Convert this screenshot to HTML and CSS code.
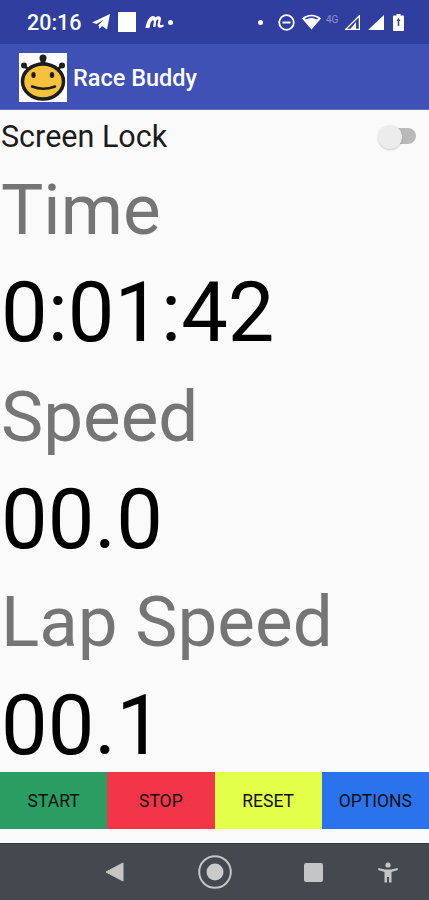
FILE: index.html
```html
<!DOCTYPE html>
<html lang="en">
<head>
<meta charset="utf-8">
<title>Race Buddy</title>
<link rel="stylesheet" href="styles.css">
</head>
<body>
<div class="phone">
  <header class="status">
    <div class="status-left">
      <span class="clock">20:16</span>
      <svg class="ic tg" width="18" height="16" viewBox="0 0 18 16"><path d="M0 8.500 L18 0 L15 15.500 L10 12 L7.500 15 L6.500 11 L12 5.500 L4.500 10 Z" fill="#fff"/></svg>
      <span class="square"></span>
      <svg class="ic em" width="20" height="14" viewBox="0 0 20 14"><path d="M0.500 13 C1.500 6 4.500 1 8 1 C9.500 1 10 2 10.500 2.500 C12.500 0.500 16 0.500 16 4 L15 9 C15 10.500 16.500 10.500 18 9.500 L19 11 C16.500 13.500 12 13.500 12.500 9.500 L13.500 5 C12.500 3.500 11.500 5 11 7 L10.500 12 L8 12 L9 6 C8 4 6.500 6 5.500 8 L4.500 13 Z" fill="#fff"/></svg>
      <span class="dot"></span>
    </div>
    <div class="status-right">
      <span class="dot"></span>
      <svg class="ic dnd" width="17" height="17" viewBox="0 0 17 17"><circle cx="8.500" cy="8.500" r="7.300" fill="none" stroke="#fff" stroke-width="1.800"/><rect x="4.500" y="7.500" width="8" height="2" fill="#fff"/></svg>
      <svg class="ic wifi" width="19" height="16" viewBox="0 0 19 16"><path d="M0 4.500 C5 -0.500 14 -0.500 19 4.500 L9.500 15.500 Z" fill="#fff"/><path d="M3 4.300 C7 1.600 12 1.600 16 4.300 L15.200 5.500 C11.500 3.500 7.500 3.500 3.800 5.500 Z" fill="#3a479f"/></svg>
      <span class="net">4G</span>
      <svg class="ic sig1" width="15" height="15" viewBox="0 0 15 15"><path d="M0.700 14.400 L14.400 0.700 V14.400 Z" fill="none" stroke="#fff" stroke-width="1.300"/><path d="M5 14.500 L11 7 V14.500 Z" fill="#fff"/></svg>
      <svg class="ic sig2" width="16" height="15" viewBox="0 0 16 15"><path d="M0 15 L16 0 V15 Z" fill="#fff"/></svg>
      <svg class="ic batt" width="11" height="17" viewBox="0 0 11 17"><path d="M3.500 0 H7.500 V1.500 H10 Q11 1.500 11 2.500 V16 Q11 17 10 17 H1 Q0 17 0 16 V2.500 Q0 1.500 1 1.500 H3.500 Z" fill="#fff"/><path d="M5.500 4 L7.500 7 H6.300 V12 H4.700 V7 H3.500 Z" fill="#3a479f"/></svg>
    </div>
  </header>
  <div class="appbar">
    <svg class="logo" width="48" height="49" viewBox="0 0 48 49">
      <rect width="48" height="49" fill="#fff"/>
      <circle cx="24" cy="5" r="3.500" fill="#1d1d1d"/>
      <rect x="21.500" y="5" width="5" height="7" fill="#1d1d1d"/>
      <circle cx="5" cy="12.500" r="3" fill="#1d1d1d"/>
      <circle cx="43" cy="12.500" r="3" fill="#1d1d1d"/>
      <path d="M5 12.500 L10 17 M43 12.500 L38 17" stroke="#1d1d1d" stroke-width="2.500"/>
      <ellipse cx="24" cy="28.500" rx="20.500" ry="17.500" fill="#f6c23e" stroke="#1d1d1d" stroke-width="3.500"/>
      <ellipse cx="14.500" cy="22" rx="2.200" ry="3" fill="#1d1d1d"/>
      <ellipse cx="33" cy="22" rx="2.200" ry="3" fill="#1d1d1d"/>
      <path d="M13 33.500 Q24 38 36 33.500" fill="none" stroke="#1d1d1d" stroke-width="2.500" stroke-linecap="round"/>
    </svg>
    <span class="app-title">Race Buddy</span>
  </div>
  <main class="content">
    <div class="lock-row">
      <span class="lock-label">Screen Lock</span>
      <span class="switch"><span class="track"></span><span class="thumb"></span></span>
    </div>
    <div class="label l-time">Time</div>
    <div class="value v-time">0:01:42</div>
    <div class="label l-speed">Speed</div>
    <div class="value v-speed">00.0</div>
    <div class="label l-lap">Lap Speed</div>
    <div class="value v-lap">00.1</div>
  </main>
  <div class="buttons">
    <button class="btn start">START</button>
    <button class="btn stop">STOP</button>
    <button class="btn reset">RESET</button>
    <button class="btn options">OPTIONS</button>
  </div>
  <div class="gap"></div>
  <nav class="navbar">
    <svg width="19" height="20" viewBox="0 0 19 20" class="nav-back"><path d="M1 10 L18 1 V19 Z" fill="#c3c5c6" stroke="#c3c5c6" stroke-linejoin="round"/></svg>
    <svg width="34" height="34" viewBox="0 0 34 34" class="nav-home"><circle cx="17" cy="17" r="15.800" fill="none" stroke="#c3c5c6" stroke-width="2"/><circle cx="17" cy="17" r="8.500" fill="#c8cacb"/></svg>
    <span class="nav-recent"></span>
    <svg width="20" height="21" viewBox="0 0 20 21" class="nav-a11y"><circle cx="10" cy="3" r="2.600" fill="#c3c5c6"/><path d="M0.500 6 L7 7.500 H13 L19.500 6 L20 8 L13.500 10 V20.500 H11 V15 H9 V20.500 H6.500 V10 L0 8 Z" fill="#c3c5c6"/></svg>
  </nav>
</div>
</body>
</html>
```
FILE: styles.css
```css
* { box-sizing: border-box; }
html, body { margin: 0; padding: 0; }
body { font-family: Roboto, "Liberation Sans", sans-serif; background: #fafafa; }
.phone { width: 429px; height: 900px; display: flex; flex-direction: column; overflow: hidden; }
.status { height: 44px; background: #303f9f; color: #fff; display: flex; justify-content: space-between; align-items: center; padding: 0 25px 0 27px; flex: none; }
.status-left, .status-right { display: flex; align-items: center; }
.clock { font-size: 21.500px; font-weight: 500; width: 65px; }
.square { width: 18px; height: 20px; background: #fff; margin: 0 9px 0 8px; }
.dot { width: 5px; height: 5px; border-radius: 50%; background: #fff; margin-left: 3px; }
.status-right .dot { margin: 0 15px 0 0; }
.dnd { margin-right: 7px; }
.wifi { margin-right: 5px; }
.net { font-size: 10px; color: #8d95cb; width: 16px; margin-top: -6px; margin-right: 3px; }
.sig1 { margin-right: 8px; }
.sig2 { margin-right: 9px; }
.appbar { height: 66px; background: #3f51b5; display: flex; align-items: center; gap: 6px; padding: 0 0 0 19px; flex: none; box-shadow: inset 0 -1px 0 #6272c8; }
.logo { flex: none; }
.app-title { color: #fff; font-size: 23.500px; font-weight: 500; padding-top: 2px; }
.content { flex: 1; min-height: 0; background: #fafafa; }
.lock-row { height: 52px; display: flex; align-items: center; justify-content: space-between; padding: 0 13px 0 1px; }
.lock-label { font-size: 30.500px; color: #1c1c1c; }
.switch { position: relative; width: 38px; height: 24px; }
.track { position: absolute; right: 0; top: 4px; width: 28px; height: 16px; border-radius: 8px; background: #b9b9b9; }
.thumb { position: absolute; left: 0; top: 1px; width: 24px; height: 24px; border-radius: 50%; background: #ececec; box-shadow: 0 1px 2px rgba(0,0,0,.2); }
.label { font-size: 71px; line-height: 83px; color: #757575; padding-left: 1px; }
.value { font-size: 83px; line-height: 90px; color: #000; padding-left: 1px; }
.l-time { margin-top: 6px; }
.v-time { margin-top: 17px; }
.l-speed { margin-top: 17px; }
.v-speed { margin-top: 17px; }
.l-lap { margin-top: 15px; }
.v-lap { margin-top: 18px; }
.buttons { display: flex; height: 57px; flex: none; box-shadow: 0 2px 3px rgba(0,0,0,.2); }
.btn { flex: 1; border: 0; padding: 0; font-family: inherit; font-size: 17.500px; color: #101010; }
.start { background: #2a9d63; }
.stop { background: #f23549; }
.reset { background: #e3ff4a; }
.options { background: #2b73ec; }
.gap { height: 14px; background: #fafafa; flex: none; }
.navbar { height: 57px; background: #43494e; flex: none; display: flex; align-items: center; border-top: 1px solid #2f3437; }
.nav-back { margin-left: 105px; }
.nav-home { margin-left: 74px; }
.nav-recent { width: 19px; height: 19px; background: #c3c5c6; border-radius: 2px; margin-left: 72px; }
.nav-a11y { margin-left: 55px; }
```
